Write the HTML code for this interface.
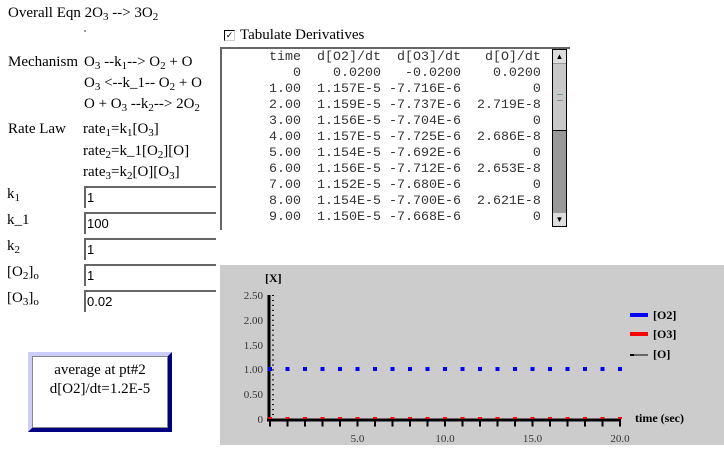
<!DOCTYPE html>
<html><head><meta charset="utf-8"><style>
body{margin:0;width:724px;height:449px;background:#fff;position:relative;overflow:hidden;font-family:"Liberation Serif",serif;font-size:15px;color:#000}
.a{position:absolute;white-space:nowrap}
sub{font-size:11px;vertical-align:-3px;line-height:0}
.in{position:absolute;left:84px;width:132px;border-top:2px solid #666;border-left:2px solid #666;font-family:"Liberation Sans",sans-serif;font-size:13px;line-height:20px;padding-left:1px;box-sizing:border-box;height:22px}
pre.a{margin:0;font-family:"Liberation Mono",monospace;font-size:13.33px;line-height:16px;color:#333;white-space:pre}
</style></head><body>
<div class="a" style="left:8px;top:5px">Overall Eqn 2O<sub>3</sub> --&gt; 3O<sub>2</sub></div>
<div class="a" style="left:84px;top:30px;width:2px;height:2px;background:#999"></div>
<div class="a" style="left:8px;top:54px">Mechanism</div>
<div class="a" style="left:84px;top:54px">O<sub>3</sub> --k<sub>1</sub>--&gt; O<sub>2</sub> + O</div>
<div class="a" style="left:84px;top:75px">O<sub>3</sub> &lt;--k_1-- O<sub>2</sub> + O</div>
<div class="a" style="left:84px;top:96px">O + O<sub>3</sub> --k<sub>2</sub>--&gt; 2O<sub>2</sub></div>
<div class="a" style="left:8px;top:121px">Rate Law</div>
<div class="a" style="left:83px;top:121px">rate<sub>1</sub>=k<sub>1</sub>[O<sub>3</sub>]</div>
<div class="a" style="left:83px;top:143px">rate<sub>2</sub>=k_1[O<sub>2</sub>][O]</div>
<div class="a" style="left:83px;top:164px">rate<sub>3</sub>=k<sub>2</sub>[O][O<sub>3</sub>]</div>

<div class="a" style="left:7px;top:186px">k<sub>1</sub></div>
<div class="a" style="left:7px;top:212px">k_1</div>
<div class="a" style="left:7px;top:238px">k<sub>2</sub></div>
<div class="a" style="left:7px;top:264px">[O<sub>2</sub>]<sub>o</sub></div>
<div class="a" style="left:7px;top:290px">[O<sub>3</sub>]<sub>o</sub></div>
<div class="in" style="top:186px">1</div>
<div class="in" style="top:212px">100</div>
<div class="in" style="top:238px">1</div>
<div class="in" style="top:264px">1</div>
<div class="in" style="top:290px">0.02</div>

<div class="a" style="left:224px;top:30px;width:9px;height:9px;border:1px solid #000;border-right-color:#ccc;border-bottom-color:#ccc;font-size:9px;line-height:9px;text-align:center">✓</div>
<div class="a" style="left:240px;top:27px">Tabulate Derivatives</div>

<div class="a" style="left:220px;top:47px;width:350px;height:183px;border-top:2px solid #666;border-left:2px solid #666;box-sizing:border-box"></div>
<pre class="a" style="left:229px;top:50px;white-space:pre">     time  d[O2]/dt  d[O3]/dt   d[O]/dt
        0    0.0200   -0.0200    0.0200
     1.00  1.157E-5 -7.716E-6         0
     2.00  1.159E-5 -7.737E-6  2.719E-8
     3.00  1.156E-5 -7.704E-6         0
     4.00  1.157E-5 -7.725E-6  2.686E-8
     5.00  1.154E-5 -7.692E-6         0
     6.00  1.156E-5 -7.712E-6  2.653E-8
     7.00  1.152E-5 -7.680E-6         0
     8.00  1.154E-5 -7.700E-6  2.621E-8
     9.00  1.150E-5 -7.668E-6         0</pre>
<div class="a" style="left:552px;top:49px;width:15px;height:178px;background:#999;border:1px solid #000;box-sizing:border-box"></div>
<div class="a" style="left:553px;top:50px;width:13px;height:13px;background:#ddd;font-size:8px;text-align:center;line-height:13px">▲</div>
<div class="a" style="left:553px;top:64px;width:13px;height:66px;background:#c8c8c8;border-bottom:1px solid #000"></div>
<div class="a" style="left:557px;top:94px;width:6px;height:5px;border-top:1px solid #799;border-bottom:1px solid #799"></div>
<div class="a" style="left:553px;top:213px;width:13px;height:13px;background:#ddd;font-size:8px;text-align:center;line-height:13px">▼</div>

<div class="a" style="left:28px;top:352px;width:144px;height:80px;box-sizing:border-box;border:4px solid;border-color:#ccf #000080 #000080 #ccf"></div>
<div class="a" style="left:32px;top:356px;width:136px;height:72px;box-sizing:border-box;border:1px solid #888"></div>
<div class="a" style="left:28px;top:361px;width:144px;text-align:center;line-height:19px;font-size:15px">average at pt#2<br>d[O2]/dt=1.2E-5</div>

<svg class="a" style="left:0;top:0" width="724" height="449">
<rect x="220" y="265" width="504" height="180" fill="#ccc"/>
<g font-family="Liberation Serif" font-size="11" fill="#333" text-anchor="end">
<text x="263" y="299">2.50</text><text x="263" y="324">2.00</text><text x="263" y="349">1.50</text><text x="263" y="373">1.00</text><text x="263" y="398">0.50</text><text x="263" y="423">0</text></g>
<g font-family="Liberation Serif" font-size="11" fill="#333" text-anchor="middle">
<text x="357.5" y="442">5.0</text><text x="445" y="442">10.0</text><text x="532.5" y="442">15.0</text><text x="620" y="442">20.0</text></g>
<text x="265" y="282" font-family="Liberation Serif" font-size="12" font-weight="bold">[X]</text>
<line x1="269" y1="295" x2="269" y2="421" stroke="#000" stroke-width="3"/>
<line x1="273" y1="295" x2="273" y2="421" stroke="#000" stroke-width="2" stroke-dasharray="1 3.96"/>
<line x1="267" y1="420" x2="621" y2="420" stroke="#000" stroke-width="3"/>
<line x1="269" y1="424" x2="622" y2="424" stroke="#000" stroke-width="5" stroke-dasharray="2 15.5"/>
<line x1="268" y1="369" x2="624" y2="369" stroke="#00f" stroke-width="4" stroke-dasharray="4 13.5"/>
<line x1="268" y1="418" x2="624" y2="418" stroke="#f00" stroke-width="2" stroke-dasharray="4 13.5"/>
<text x="635" y="422" font-family="Liberation Serif" font-size="12" font-weight="bold">time (sec)</text>
<rect x="630" y="313" width="18" height="4" fill="#00f"/>
<rect x="630" y="332" width="18" height="4" fill="#f00"/>
<rect x="630" y="354" width="4" height="2" fill="#000"/><line x1="634" y1="355" x2="648" y2="355" stroke="#000"/>
<g font-family="Liberation Serif" font-size="12" font-weight="bold"><text x="653" y="319">[O2]</text><text x="653" y="338">[O3]</text><text x="653" y="358">[O]</text></g>
</svg>
</body></html>
